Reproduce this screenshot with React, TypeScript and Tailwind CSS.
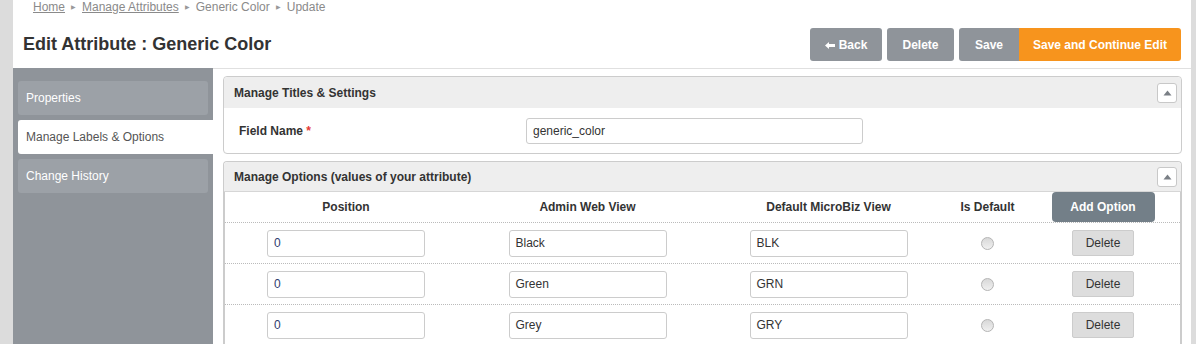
import React from "react";

const font = { fontFamily: '"Liberation Sans", Arial, sans-serif' };

function Collapse() {
  return (
    <div className="flex h-[20px] w-[20px] items-center justify-center rounded-[3px] border border-[#c8c8c8] bg-white">
      <svg width="9" height="6" viewBox="0 0 9 6">
        <path d="M4.5 0.5 L8.5 5.5 L0.5 5.5 Z" fill="#7a7f85" />
      </svg>
    </div>
  );
}

function Radio() {
  return (
    <div className="h-[13px] w-[13px] rounded-full border border-[#b4b4b4] bg-gradient-to-b from-[#d8d8d8] to-[#f0f0f0]" />
  );
}

const rows = [
  { pos: "0", admin: "Black", def: "BLK" },
  { pos: "0", admin: "Green", def: "GRN" },
  { pos: "0", admin: "Grey", def: "GRY" },
];

function Input({ value, blue }: { value: string; blue?: boolean }) {
  return (
    <div
      className={`flex h-[27px] w-[158px] items-center rounded-[3px] border border-[#cccccc] bg-white px-[6px] text-[12px] ${
        blue ? "text-[#2f3d6e]" : "text-[#333]"
      }`}
    >
      {value}
    </div>
  );
}

function Sep() {
  return <span className="text-[6px] text-[#999]">▶</span>;
}

export default function App() {
  return (
    <div className="flex h-[344px] w-[1196px] overflow-hidden bg-white" style={font}>
      <div className="w-[13px] shrink-0 bg-[#dcdcdc]" />
      <div className="flex w-[1178px] shrink-0 flex-col">
        {/* header */}
        <div className="relative h-[68px] shrink-0 bg-white">
          <div className="flex items-center gap-[6px] pl-[20px] pt-0 text-[12px] leading-[14px] text-[#8a8a8a]">
            <span className="underline">Home</span>
            <Sep />
            <span className="underline">Manage Attributes</span>
            <Sep />
            <span>Generic Color</span>
            <Sep />
            <span>Update</span>
          </div>
          <div className="flex items-center justify-between pl-[10px] pr-[10px] pt-[14px]">
            <div className="text-[18px] font-bold text-[#333]">Edit Attribute : Generic Color</div>
            <div className="flex items-center text-[12px] font-bold text-white">
              <div className="flex h-[33px] w-[72px] items-center justify-center gap-[4px] rounded-[3px] bg-[#8f949a]">
                <svg width="10" height="8" viewBox="0 0 10 8">
                  <path d="M0 4.5 L4 1 L4 3 L10 3 L10 6 L4 6 L4 8 Z" fill="#fff" />
                </svg>
                <span>Back</span>
              </div>
              <div className="ml-[5px] flex h-[33px] w-[67px] items-center justify-center rounded-[3px] bg-[#8f949a]">
                Delete
              </div>
              <div className="ml-[5px] flex h-[33px] w-[60px] items-center justify-center rounded-l-[3px] bg-[#8f949a]">
                Save
              </div>
              <div className="flex h-[33px] w-[162px] items-center justify-center rounded-r-[3px] bg-[#f7941d]">
                Save and Continue Edit
              </div>
            </div>
          </div>
        </div>
        {/* body */}
        <div className="flex flex-1">
          <div className="flex w-[200px] shrink-0 flex-col gap-[5px] bg-[#8f949a] pl-[5px] pt-[13px] text-[12px]">
            <div className="mr-[5px] flex h-[34px] items-center rounded-[3px] bg-[#9ca1a7] pl-[8px] text-white">
              Properties
            </div>
            <div className="flex h-[34px] items-center rounded-l-[3px] bg-white pl-[8px] text-[#555]">
              Manage Labels &amp; Options
            </div>
            <div className="mr-[5px] flex h-[34px] items-center rounded-[3px] bg-[#9ca1a7] pl-[8px] text-white">
              Change History
            </div>
          </div>
          <div className="flex flex-1 flex-col gap-[7px] border-t border-[#e0e0e0] pl-[10px] pr-[9px] pt-[7px]">
            {/* panel 1 */}
            <div className="rounded-[4px] border border-[#cccccc]">
              <div className="flex h-[31px] items-center justify-between rounded-t-[4px] bg-[#eeeeee] pl-[10px] pr-[4px]">
                <span className="text-[12px] font-bold text-[#333]">Manage Titles &amp; Settings</span>
                <Collapse />
              </div>
              <div className="flex h-[45px] items-center">
                <div className="w-[302px] pl-[15px] text-[12px] font-bold text-[#333]">
                  Field Name <span className="text-[#e53935]">*</span>
                </div>
                <div className="flex h-[26px] w-[337px] items-center rounded-[3px] border border-[#cccccc] px-[6px] text-[12px] text-[#333]">
                  generic_color
                </div>
              </div>
            </div>
            {/* panel 2 */}
            <div className="flex-1 rounded-t-[4px] border border-b-0 border-[#cccccc]">
              <div className="flex h-[30px] items-center justify-between rounded-t-[4px] border-b border-[#d6d6d6] bg-[#eeeeee] pl-[10px] pr-[4px]">
                <span className="text-[12px] font-bold text-[#333]">Manage Options (values of your attribute)</span>
                <Collapse />
              </div>
              <div className="h-full border-l border-r border-[#cccccc]">
                <div className="grid h-[31px] grid-cols-[242px_241px_241px_77px_1fr] items-center border-b border-dotted border-[#bbbbbb] text-[12px] font-bold text-[#333]">
                  <div className="text-center">Position</div>
                  <div className="text-center">Admin Web View</div>
                  <div className="text-center">Default MicroBiz View</div>
                  <div className="text-center">Is Default</div>
                  <div className="flex justify-center">
                    <div className="flex h-[30px] w-[103px] items-center justify-center rounded-[4px] bg-[#737f88] text-white">
                      Add Option
                    </div>
                  </div>
                </div>
                {rows.map((r, i) => (
                  <div
                    key={i}
                    className="grid h-[41px] grid-cols-[242px_241px_241px_77px_1fr] items-center border-b border-dotted border-[#bbbbbb]"
                  >
                    <div className="flex justify-center">
                      <Input value={r.pos} blue />
                    </div>
                    <div className="flex justify-center">
                      <Input value={r.admin} />
                    </div>
                    <div className="flex justify-center">
                      <Input value={r.def} />
                    </div>
                    <div className="flex justify-center">
                      <Radio />
                    </div>
                    <div className="flex justify-center">
                      <div className="flex h-[26px] w-[62px] items-center justify-center rounded-[2px] border border-[#cccccc] bg-[#dddddd] text-[12px] text-[#333]">
                        Delete
                      </div>
                    </div>
                  </div>
                ))}
              </div>
            </div>
          </div>
        </div>
      </div>
      <div className="w-[5px] shrink-0 bg-[#dcdcdc]" />
    </div>
  );
}
